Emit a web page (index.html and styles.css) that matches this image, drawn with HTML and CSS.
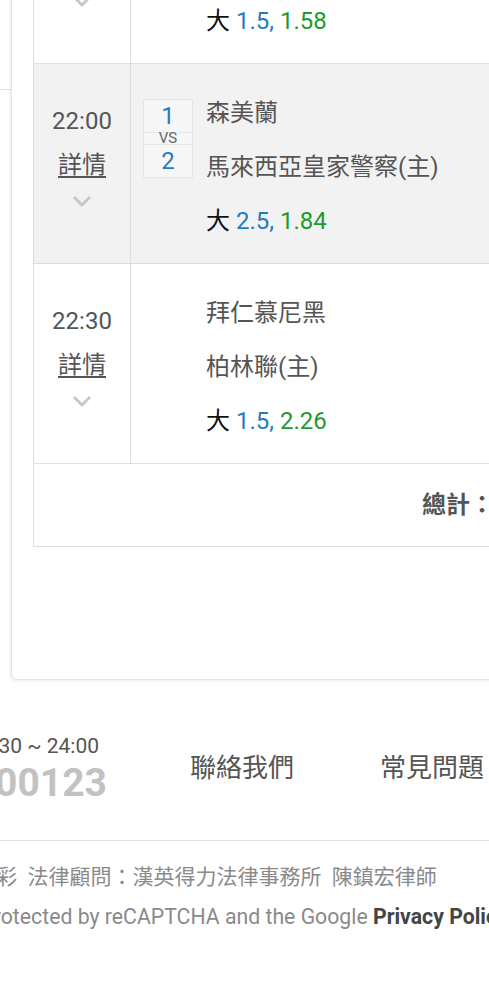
FILE: index.html
```html
<!DOCTYPE html>
<html lang="zh-Hant">
<head>
  <meta charset="UTF-8">
  <meta name="viewport" content="width=device-width, initial-scale=1">
  <title>我的投注</title>
  <link rel="stylesheet" href="styles.css">
</head>
<body>

  <div class="page">
    <div class="layout">
      <aside class="side"></aside>

      <section class="card">
        <div class="matches">

          <div class="match">
            <div class="match-time">
              <div class="time">21:30</div>
              <a class="detail" href="#">詳情</a>
              <svg class="chev" width="20" height="12" viewBox="0 0 20 12"><path d="M2 2 L10 10 L18 2"/></svg>
            </div>
            <div class="match-body">
              <div class="vs-col">
                <div class="vs-box">
                  <div class="vs-num">0</div>
                  <div class="vs-mid">VS</div>
                  <div class="vs-num">1</div>
                </div>
              </div>
              <div class="teams">
                <div class="team">柔佛DT</div>
                <div class="team">吉打(主)</div>
                <div class="odds"><span class="big">大</span> <span class="line">1.5,</span> <span class="price">1.58</span></div>
              </div>
            </div>
          </div>

          <div class="match alt">
            <div class="match-time">
              <div class="time">22:00</div>
              <a class="detail" href="#">詳情</a>
              <svg class="chev" width="20" height="12" viewBox="0 0 20 12"><path d="M2 2 L10 10 L18 2"/></svg>
            </div>
            <div class="match-body">
              <div class="vs-col">
                <div class="vs-box">
                  <div class="vs-num">1</div>
                  <div class="vs-mid">VS</div>
                  <div class="vs-num">2</div>
                </div>
              </div>
              <div class="teams">
                <div class="team">森美蘭</div>
                <div class="team">馬來西亞皇家警察(主)</div>
                <div class="odds"><span class="big">大</span> <span class="line">2.5,</span> <span class="price">1.84</span></div>
              </div>
            </div>
          </div>

          <div class="match">
            <div class="match-time">
              <div class="time">22:30</div>
              <a class="detail" href="#">詳情</a>
              <svg class="chev" width="20" height="12" viewBox="0 0 20 12"><path d="M2 2 L10 10 L18 2"/></svg>
            </div>
            <div class="match-body">
              <div class="vs-col"></div>
              <div class="teams">
                <div class="team">拜仁慕尼黑</div>
                <div class="team">柏林聯(主)</div>
                <div class="odds"><span class="big">大</span> <span class="line">1.5,</span> <span class="price">2.26</span></div>
              </div>
            </div>
          </div>

          <div class="total">總計：</div>
        </div>
      </section>
    </div>

    <footer>
      <div class="footer-main">
        <div class="contact">
          <div class="hours">服務時間 09:30 ~ 24:00</div>
          <div class="phone">0800000123</div>
        </div>
        <a class="foot-link" href="#">聯絡我們</a>
        <a class="foot-link" href="#">常見問題</a>
      </div>
      <div class="legal">
        <p class="legal-law">台灣運彩&nbsp; 法律顧問：漢英得力法律事務所&nbsp; 陳鎮宏律師</p>
        <p class="legal-captcha">This site is protected by reCAPTCHA and the Google <b>Privacy Policy</b> and <b>Terms of Service</b> apply.</p>
      </div>
    </footer>
  </div>

</body>
</html>
```

FILE: styles.css
```css
* {
  box-sizing: border-box;
}

body {
  margin: 0;
  font-family: Roboto, "Noto Sans CJK TC", sans-serif;
  color: #555;
  background: #fff;
  overflow-x: hidden;
}

/* page is scrolled part way down */
.page {
  margin-top: -158px;
}

.layout {
  display: flex;
  align-items: flex-start;
}

.side {
  flex: 0 0 11px;
  height: 248px;
  border-bottom: 1px solid #e2e2e2;
}

.card {
  flex: 0 0 580px;
  border: 1px solid #e4e4e4;
  border-radius: 6px;
  box-shadow: -1px 1px 3px rgba(0, 0, 0, 0.08);
  padding: 20px 0 132px 21px;
}

.matches {
  width: 480px;
  border: 1px solid #dedede;
}

.match {
  display: flex;
  height: 200px;
  border-bottom: 1px solid #dedede;
}

.match.alt {
  background: #f2f2f2;
}

.match-time {
  flex: 0 0 97px;
  border-right: 1px solid #dedede;
  padding-top: 35px;
  text-align: center;
  font-size: 24px;
  line-height: 44px;
}

.time,
.detail {
  display: block;
}

.detail {
  color: #555;
  text-decoration: underline;
  text-underline-offset: 3px;
}

.chev {
  display: block;
  margin: 8px auto 0;
  fill: none;
  stroke: #c6c6c6;
  stroke-width: 2.8;
}

.match-body {
  flex: 1;
  display: flex;
  align-items: flex-start;
  padding: 22px 0 0 12px;
}

.vs-col {
  flex: 0 0 50px;
  margin-right: 13px;
}

.vs-box {
  margin-top: 13px;
  border: 1px solid #e3e3e3;
  background: #f6f6f6;
  text-align: center;
}

.match:not(.alt) .vs-box {
  background: #fff;
}

.vs-num {
  height: 32px;
  line-height: 32px;
  font-size: 24px;
  color: #1f7dbf;
}

.vs-mid {
  height: 13px;
  line-height: 10px;
  font-size: 15px;
  color: #666;
  border-top: 1px solid #e6e6e6;
  border-bottom: 1px solid #e6e6e6;
}

.teams {
  font-size: 24px;
  line-height: 54px;
  white-space: nowrap;
}

.big {
  color: #111;
}

.line {
  color: #1f7dbf;
}

.price {
  color: #1e9a2c;
}

.total {
  height: 82px;
  line-height: 82px;
  padding-right: 18px;
  text-align: right;
  font-size: 24px;
  font-weight: 700;
}

.footer-main {
  display: flex;
  align-items: center;
  padding: 52px 0 37px;
  border-bottom: 1px solid #e2e2e2;
  white-space: nowrap;
}

.contact {
  flex: 0 0 260px;
  min-width: 0;
  margin-left: -153px;
  text-align: right;
}

.hours {
  margin-right: 8px;
  font-size: 21px;
  line-height: 28px;
}

.phone {
  margin-top: 3px;
  font-size: 39px;
  line-height: 40px;
  font-weight: 700;
  color: #c2c2c2;
}

.foot-link {
  margin-left: 83px;
  font-size: 26px;
  line-height: 36px;
  color: #555;
  text-decoration: none;
}

.foot-link + .foot-link {
  margin-left: 86px;
}

.legal {
  padding-top: 16px;
  font-size: 21px;
  line-height: 40px;
  color: #8a8a8a;
  white-space: nowrap;
}

.legal p {
  margin: 0;
}

.legal-law {
  margin-left: -67px !important;
}

.legal-captcha {
  margin-left: -125px !important;
  font-size: 21.25px;
}

.legal b {
  color: #444;
}
```
